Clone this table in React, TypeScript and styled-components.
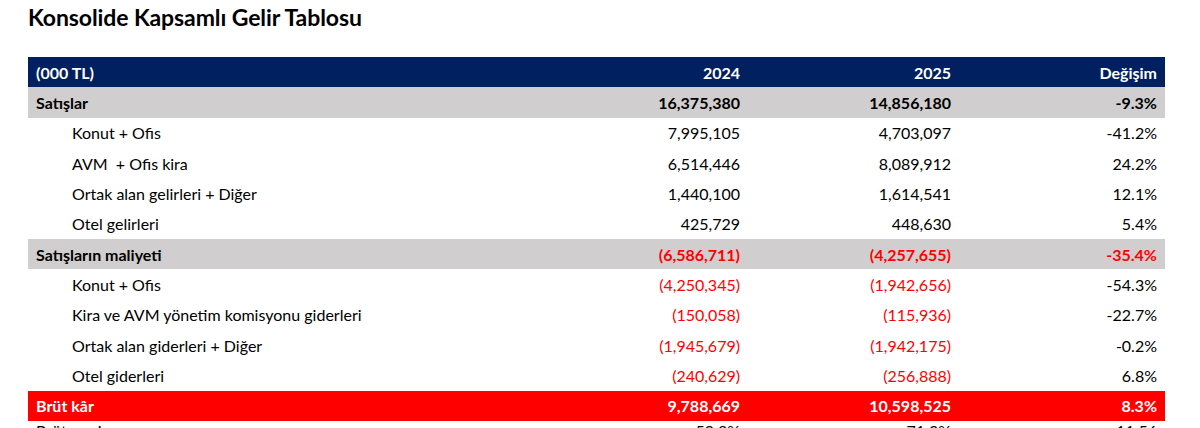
import React from "react";
import styled, { createGlobalStyle } from "styled-components";

type Tone = "head" | "group" | "item" | "total" | "plain";

type Line = {
  label: string;
  y2024: string;
  y2025: string;
  change: string;
  tone: Tone;
  negative?: boolean;
};

const lines: Line[] = [
  { label: "Satışlar", y2024: "16,375,380", y2025: "14,856,180", change: "-9.3%", tone: "group" },
  { label: "Konut + Ofis", y2024: "7,995,105", y2025: "4,703,097", change: "-41.2%", tone: "item" },
  { label: "AVM  + Ofis kira", y2024: "6,514,446", y2025: "8,089,912", change: "24.2%", tone: "item" },
  { label: "Ortak alan gelirleri + Diğer", y2024: "1,440,100", y2025: "1,614,541", change: "12.1%", tone: "item" },
  { label: "Otel gelirleri", y2024: "425,729", y2025: "448,630", change: "5.4%", tone: "item" },
  { label: "Satışların maliyeti", y2024: "(6,586,711)", y2025: "(4,257,655)", change: "-35.4%", tone: "group", negative: true },
  { label: "Konut + Ofis", y2024: "(4,250,345)", y2025: "(1,942,656)", change: "-54.3%", tone: "item", negative: true },
  { label: "Kira ve AVM yönetim komisyonu giderleri", y2024: "(150,058)", y2025: "(115,936)", change: "-22.7%", tone: "item", negative: true },
  { label: "Ortak alan giderleri + Diğer", y2024: "(1,945,679)", y2025: "(1,942,175)", change: "-0.2%", tone: "item", negative: true },
  { label: "Otel giderleri", y2024: "(240,629)", y2025: "(256,888)", change: "6.8%", tone: "item", negative: true },
  { label: "Brüt kâr", y2024: "9,788,669", y2025: "10,598,525", change: "8.3%", tone: "total" },
  { label: "Brüt marj", y2024: "59.8%", y2025: "71.3%", change: "11.56", tone: "plain" },
];

const GlobalStyle = createGlobalStyle`
  body {
    margin: 0;
    background: #ffffff;
    font-family: Lato, "Open Sans", sans-serif;
    color: #000000;
  }
`;

const Page = styled.div`
  padding: 0 35px 0 28px;
  height: 428px;
  overflow: hidden;
`;

const Title = styled.h1`
  margin: 0;
  padding-top: 4px;
  height: 57px;
  box-sizing: border-box;
  font-size: 23px;
  font-weight: 700;
  line-height: 26px;
  letter-spacing: -0.1px;
`;

const Table = styled.div`
  display: grid;
  grid-template-columns: 1fr 219px 211px 206px;
  grid-auto-rows: 30.33px;
  font-size: 16px;
`;

const backgrounds: Record<Tone, string> = {
  head: "#002060",
  group: "#d0cece",
  item: "transparent",
  total: "#ff0000",
  plain: "transparent",
};

const Cell = styled.div<{ $tone: Tone; $red?: boolean; $num?: boolean; $indent?: boolean }>`
  display: flex;
  align-items: ${(p) => (p.$tone === "plain" ? "flex-start" : "center")};
  justify-content: ${(p) => (p.$num ? "flex-end" : "flex-start")};
  padding: ${(p) => (p.$indent ? "0 8px 0 44px" : "0 8px")};
  padding-top: ${(p) => (p.$tone === "plain" ? "0" : undefined)};
  line-height: 19px;
  background: ${(p) => backgrounds[p.$tone]};
  font-weight: ${(p) => (p.$tone === "item" || p.$tone === "plain" ? 400 : 700)};
  color: ${(p) =>
    p.$tone === "head" || p.$tone === "total"
      ? "#ffffff"
      : p.$red
      ? "#ff0000"
      : "#000000"};
  white-space: pre;
`;

export default function App() {
  return (
    <>
      <GlobalStyle />
      <Page>
        <Title>Konsolide Kapsamlı Gelir Tablosu</Title>
        <Table>
          <Cell $tone="head">(000 TL)</Cell>
          <Cell $tone="head" $num>2024</Cell>
          <Cell $tone="head" $num>2025</Cell>
          <Cell $tone="head" $num>Değişim</Cell>
          {lines.map((l, i) => (
            <React.Fragment key={i}>
              <Cell $tone={l.tone} $indent={l.tone === "item"}>
                {l.label}
              </Cell>
              <Cell $tone={l.tone} $num $red={l.negative}>
                {l.y2024}
              </Cell>
              <Cell $tone={l.tone} $num $red={l.negative}>
                {l.y2025}
              </Cell>
              <Cell $tone={l.tone} $num $red={l.negative && l.tone === "group"}>
                {l.change}
              </Cell>
            </React.Fragment>
          ))}
        </Table>
      </Page>
    </>
  );
}
